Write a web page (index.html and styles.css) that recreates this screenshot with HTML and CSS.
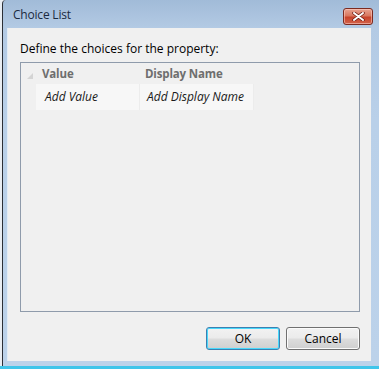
FILE: index.html
```html
<!DOCTYPE html>
<html>
<head>
<meta charset="utf-8">
<link rel="stylesheet" href="styles.css">
<title>Choice List</title>
</head>
<body>
<div class="window">
  <div class="titlebar">
    <span class="title">Choice List</span>
    <button class="close" aria-label="Close">
      <svg width="13" height="9" viewBox="0 0 13 9">
        <path d="M2 1 L11 8 M11 1 L2 8" stroke="#6b1a12" stroke-width="3.4" stroke-linecap="round"/>
        <path d="M2 1 L11 8 M11 1 L2 8" stroke="#ffffff" stroke-width="2" stroke-linecap="round"/>
      </svg>
    </button>
  </div>
  <div class="client">
    <div class="label">Define the choices for the property:</div>
    <div class="grid">
      <div class="grid-head">
        <div class="corner">
          <svg width="6" height="6" viewBox="0 0 6 6"><path d="M6 0 L6 6 L0 6 Z" fill="#d4d4d4"/></svg>
        </div>
        <div class="hcell c1">Value</div>
        <div class="hcell c2">Display Name</div>
      </div>
      <div class="grid-row">
        <div class="corner"></div>
        <div class="cell c1">Add Value</div>
        <div class="cell c2">Add Display Name</div>
      </div>
    </div>
    <div class="buttons">
      <button class="btn default">OK</button>
      <button class="btn">Cancel</button>
    </div>
  </div>
  <div class="bottom-edge"></div>
</div>
</body>
</html>
```

FILE: styles.css
```css
html, body {
  margin: 0;
  padding: 0;
}
body {
  width: 379px;
  height: 369px;
  overflow: hidden;
  background: #e9edf2;
  font-family: "Open Sans", "Noto Sans", sans-serif;
  font-size: 12px;
  color: #000;
}
.window {
  margin-left: 2px;
  width: 377px;
  height: 369px;
  border-left: 1px solid #2b2f36;
  border-top-left-radius: 4px;
  background: linear-gradient(to bottom, #a1bbd8 0px, #b3cae4 28px, #b9d0e9 120px, #bcd2ea 100%);
  display: flex;
  flex-direction: column;
  box-sizing: border-box;
}
.titlebar {
  height: 28px;
  display: flex;
  align-items: flex-start;
  justify-content: space-between;
  padding-left: 10px;
  padding-right: 6px;
  box-sizing: border-box;
}
.title {
  margin-top: 6px;
  font-size: 12px;
  letter-spacing: -0.2px;
  color: #1b2a3f;
}
.close {
  margin-top: 8px;
  width: 30px;
  height: 17px;
  padding: 0;
  border: 1px solid #7c2a20;
  border-radius: 3px;
  background: linear-gradient(to bottom, #e8a392 0%, #d9775f 45%, #c8432b 55%, #d2634b 100%);
  box-shadow: inset 0 0 0 1px rgba(255,210,200,0.55);
  display: flex;
  align-items: center;
  justify-content: center;
}
.client {
  margin-left: 5px;
  width: 363px;
  height: 333px;
  background: #f0f0f0;
  box-shadow: -1px 0 0 #e2ecf6;
  display: flex;
  flex-direction: column;
  box-sizing: border-box;
  padding: 12px 11px 11px 12px;
}
.label {
  font-size: 12px;
  line-height: 17px;
  color: #000;
  height: 22px;
}
.grid {
  height: 250px;
  border: 1px solid #8f9bab;
  box-sizing: border-box;
  background: #f0f0f0;
}
.grid-head, .grid-row {
  display: flex;
}
.grid-head {
  height: 21px;
}
.grid-row {
  height: 26px;
}
.corner {
  width: 15px;
  display: flex;
  align-items: flex-end;
  justify-content: flex-end;
  padding: 0 3px 5px 0;
  box-sizing: border-box;
}
.hcell {
  font-weight: bold;
  color: #6e6e6e;
  font-size: 11.5px;
  letter-spacing: -0.15px;
  line-height: 21px;
  padding-left: 6px;
  box-sizing: border-box;
}
.hcell.c1 { width: 104px; }
.hcell.c2 { width: 113px; padding-left: 5px; }
.cell {
  font-style: italic;
  font-size: 12px;
  color: #1a1a1a;
  line-height: 26px;
  background: #f7f7f7;
  box-sizing: border-box;
  border-right: 1px solid #ececec;
}
.cell.c1 { width: 104px; padding-left: 9px; }
.cell.c2 { width: 114px; padding-left: 7px; }
.buttons {
  margin-top: auto;
  display: flex;
  justify-content: flex-end;
  gap: 6px;
}
.btn {
  width: 74px;
  height: 23px;
  padding: 0;
  font-family: "Open Sans", "Noto Sans", sans-serif;
  font-size: 12px;
  color: #000;
  border: 1px solid #707070;
  border-radius: 3px;
  background: linear-gradient(to bottom, #f2f2f2 0%, #ebebeb 48%, #dddddd 52%, #cfcfcf 100%);
  box-shadow: inset 0 0 0 1px #fbfbfb;
}
.btn.default {
  border-color: #3c7fb1;
  box-shadow: inset 0 0 0 1px #48d8fb;
}
.bottom-edge {
  margin-top: auto;
  height: 3px;
  margin-left: -3px;
  background: #3fc5ea;
}
```
